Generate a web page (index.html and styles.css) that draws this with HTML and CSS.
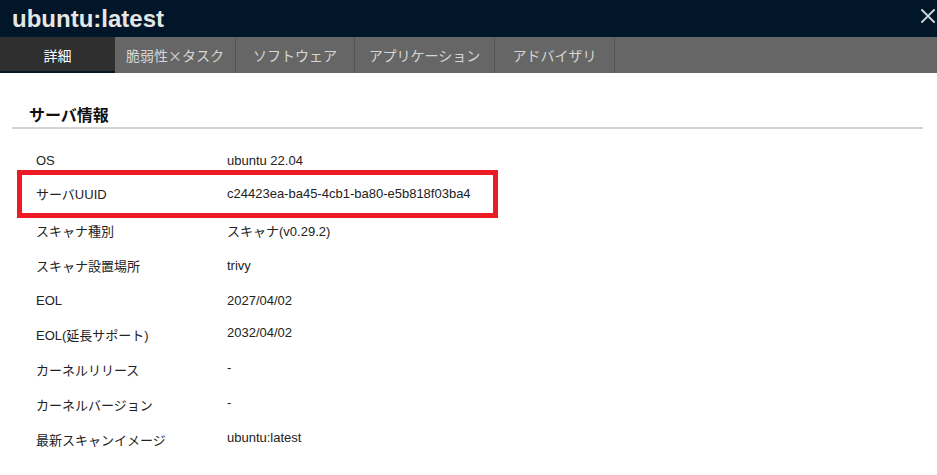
FILE: index.html
```html
<!DOCTYPE html>
<html lang="ja">
<head>
<meta charset="utf-8">
<title>ubuntu:latest</title>
<link rel="stylesheet" href="styles.css">
</head>
<body>
<div class="modal">
  <header class="modal-header">
    <h1 class="modal-title">ubuntu:latest</h1>
    <button class="close-btn" aria-label="閉じる">
      <svg viewBox="0 0 14 14" width="14" height="14"><path d="M1 1 L13 13 M13 1 L1 13" stroke="#c9ccd0" stroke-width="2" stroke-linecap="square" fill="none"/></svg>
    </button>
  </header>
  <nav class="tabs">
    <div class="tab tab-active tab-detail">詳細</div>
    <div class="tab tab-vuln">脆弱性×タスク</div>
    <div class="tab tab-soft">ソフトウェア</div>
    <div class="tab tab-app">アプリケーション</div>
    <div class="tab tab-adv">アドバイザリ</div>
    <div class="tab-fill"></div>
  </nav>
  <section class="content">
    <h2 class="section-title">サーバ情報</h2>
    <div class="info">
      <div class="row"><div class="label">OS</div><div class="value">ubuntu 22.04</div></div>
      <div class="row row-highlight"><div class="label">サーバUUID</div><div class="value">c24423ea-ba45-4cb1-ba80-e5b818f03ba4</div></div>
      <div class="row"><div class="label">スキャナ種別</div><div class="value">スキャナ(v0.29.2)</div></div>
      <div class="row"><div class="label">スキャナ設置場所</div><div class="value">trivy</div></div>
      <div class="row"><div class="label">EOL</div><div class="value">2027/04/02</div></div>
      <div class="row row-up"><div class="label">EOL(延長サポート)</div><div class="value">2032/04/02</div></div>
      <div class="row row-up"><div class="label">カーネルリリース</div><div class="value">-</div></div>
      <div class="row row-up"><div class="label">カーネルバージョン</div><div class="value">-</div></div>
      <div class="row row-up"><div class="label">最新スキャンイメージ</div><div class="value">ubuntu:latest</div></div>
    </div>
  </section>
</div>
</body>
</html>
```
FILE: styles.css
```css
* { box-sizing: border-box; }

html, body {
  margin: 0;
  padding: 0;
  background: #ffffff;
}

body {
  font-family: "Liberation Sans", Arial, "Noto Sans CJK JP", sans-serif;
  color: #222222;
  width: 937px;
  height: 475px;
  overflow: hidden;
}

.modal-header {
  height: 37px;
  background: #011628;
  display: flex;
  align-items: center;
  padding: 0 2px 0 12px;
}

.modal-title {
  margin: 0;
  font-family: "Liberation Sans", Arial, sans-serif;
  font-size: 24px;
  font-weight: bold;
  color: #e6e6e6;
  line-height: 37px;
  letter-spacing: 0;
}

.close-btn {
  margin-left: auto;
  width: 14px;
  height: 14px;
  padding: 0;
  border: 0;
  background: transparent;
  display: flex;
  align-self: flex-start;
  margin-top: 9px;
}

.close-btn svg { display: block; }

.tabs {
  display: flex;
  height: 36px;
  background: #666666;
}

.tab {
  height: 36px;
  display: flex;
  align-items: center;
  justify-content: center;
  font-family: "Noto Sans CJK JP", sans-serif;
  font-size: 14px;
  color: #d6d6d6;
  background: #666666;
  border-right: 1px solid #545454;
  white-space: nowrap;
}

.tab-active {
  background: #2f2f2f;
  color: #ffffff;
  border-right: 0;
  border-bottom: 2px solid #011628;
  padding-top: 2px;
}

.tab-detail { width: 115px; }
.tab-vuln { width: 121px; }
.tab-soft { width: 119px; }
.tab-app { width: 140px; }
.tab-adv { width: 120px; }
.tab-fill { flex: 1; }

.content {
  padding: 29px 14px 0 12px;
}

.section-title {
  margin: 0;
  font-family: "Noto Sans CJK JP", sans-serif;
  font-size: 16px;
  font-weight: bold;
  line-height: 24px;
  padding: 0 0 1px 17px;
  border-bottom: 2px solid #d3d3d3;
  color: #111111;
}

.info {
  margin-top: 14px;
}

.row {
  display: flex;
  align-items: center;
  height: 35px;
  font-size: 13px;
  position: relative;
}

.label {
  width: 215px;
  padding-left: 24px;
  font-family: "Liberation Sans", Arial, "Noto Sans CJK JP", sans-serif;
  color: #222222;
}

.value {
  color: #222222;
}

.row-up .label {
  margin-top: -3px;
}

.row-up .value {
  margin-top: -7px;
}

.row-highlight .label,
.row-highlight .value {
  margin-top: -4px;
}

.row-highlight::after {
  content: "";
  position: absolute;
  left: 5px;
  top: -8px;
  width: 471px;
  height: 38px;
  border: 5px solid #ed1c24;
  pointer-events: none;
}
```
